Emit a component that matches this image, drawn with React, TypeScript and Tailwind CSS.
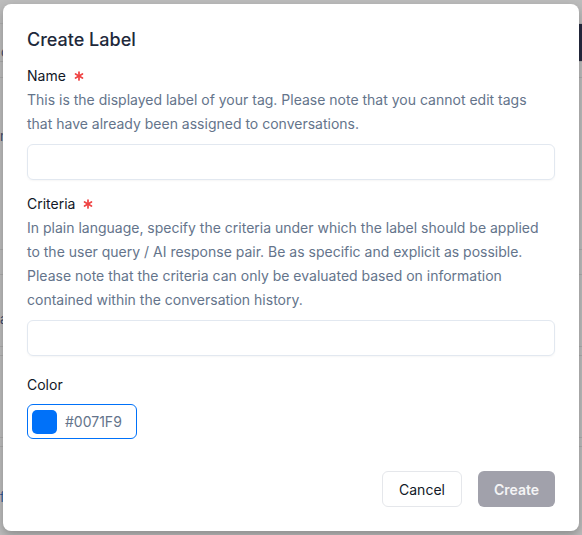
import React from "react";

function Asterisk() {
  return (
    <svg
      width="16"
      height="16"
      viewBox="0 0 24 24"
      fill="none"
      stroke="#ef4444"
      strokeWidth="2.6"
      strokeLinecap="round"
      strokeLinejoin="round"
      className="ml-[5px]"
    >
      <path d="M12 6v12" />
      <path d="M17.196 9 6.804 15" />
      <path d="m6.804 9 10.392 6" />
    </svg>
  );
}

function Background() {
  return (
    <div className="flex flex-col w-full h-full bg-[#bcbcbc] text-[13px] text-[#3b4a6b]">
      <div className="h-[24px] border-b border-[#b0b0b0]"></div>
      <div className="flex h-[38px] border-b border-[#ababab]">
        <div className="flex-1 pl-[1px] pt-[22px] leading-none">c</div>
        <div className="w-[4px] bg-[#262a40]"></div>
      </div>
      <div className="h-[16px] border-b border-[#acacac]"></div>
      <div className="h-[172px] border-b border-[#acacac] pt-[52px] leading-none">n</div>
      <div className="h-[25px] border-b border-[#acacac]"></div>
      <div className="h-[72px] border-b border-[#acacac] pt-[38px] leading-none">a</div>
      <div className="h-[9px] border-b border-[#acacac]"></div>
      <div className="h-[82px] border-b border-[#acacac]"></div>
      <div className="h-[9px] border-b border-[#acacac]"></div>
      <div className="h-[60px] pt-[44px] leading-none text-[#2f5b9a]">f</div>
    </div>
  );
}

export default function App() {
  return (
    <div
      className="relative w-full h-[535px] overflow-hidden"
      style={{ fontFamily: "Inter, 'Noto Sans', sans-serif" }}
    >
      <Background />
      <div className="absolute inset-0 flex items-center justify-center">
        <div className="w-[576px] bg-white rounded-lg p-6 shadow-[0_4px_10px_rgba(0,0,0,0.25)] flex flex-col">
          <h2 className="text-[18px] leading-6 font-medium text-[#1e293b]">Create Label</h2>

          <div className="mt-3.5 flex items-center text-[14px] leading-5 text-[#111827]">
            <span>Name</span>
            <Asterisk />
          </div>
          <p className="mt-0.5 text-[14px] leading-6 text-[#64748b]">
            This is the displayed label of your tag. Please note that you cannot edit tags that
            have already been assigned to conversations.
          </p>
          <input
            className="mt-2 h-9 w-full rounded-md border border-[#e2e8f0] shadow-[0_1px_2px_rgba(0,0,0,0.04)] px-3 text-[14px] outline-none"
            type="text"
          />

          <div className="mt-3.5 flex items-center text-[14px] leading-5 text-[#111827]">
            <span>Criteria</span>
            <Asterisk />
          </div>
          <p className="mt-0.5 text-[14px] leading-6 text-[#64748b]">
            In plain language, specify the criteria under which the label should be applied to the
            user query / AI response pair. Be as specific and explicit as possible. Please note that
            the criteria can only be evaluated based on information contained within the
            conversation history.
          </p>
          <input
            className="mt-2 h-9 w-full rounded-md border border-[#e2e8f0] shadow-[0_1px_2px_rgba(0,0,0,0.04)] px-3 text-[14px] outline-none"
            type="text"
          />

          <div className="mt-[19px] text-[14px] leading-5 text-[#111827]">Color</div>
          <div className="mt-[9px] w-[110px] h-[35px] rounded-md border border-[#0071F9] flex items-center pl-[4px] gap-2">
            <div className="w-[25px] h-[24px] rounded-[5px] bg-[#0071F9]"></div>
            <span className="text-[14px] text-[#64748b]">#0071F9</span>
          </div>

          <div className="mt-8 flex justify-end gap-4">
            <button className="h-9 w-[80px] rounded-md border border-[#e5e7eb] bg-white text-[14px] font-normal text-[#111827]">
              Cancel
            </button>
            <button className="h-9 w-[77px] rounded-md bg-[#a1a1ab] text-[14px] font-semibold text-[#f4f4f5]">
              Create
            </button>
          </div>
        </div>
      </div>
    </div>
  );
}
